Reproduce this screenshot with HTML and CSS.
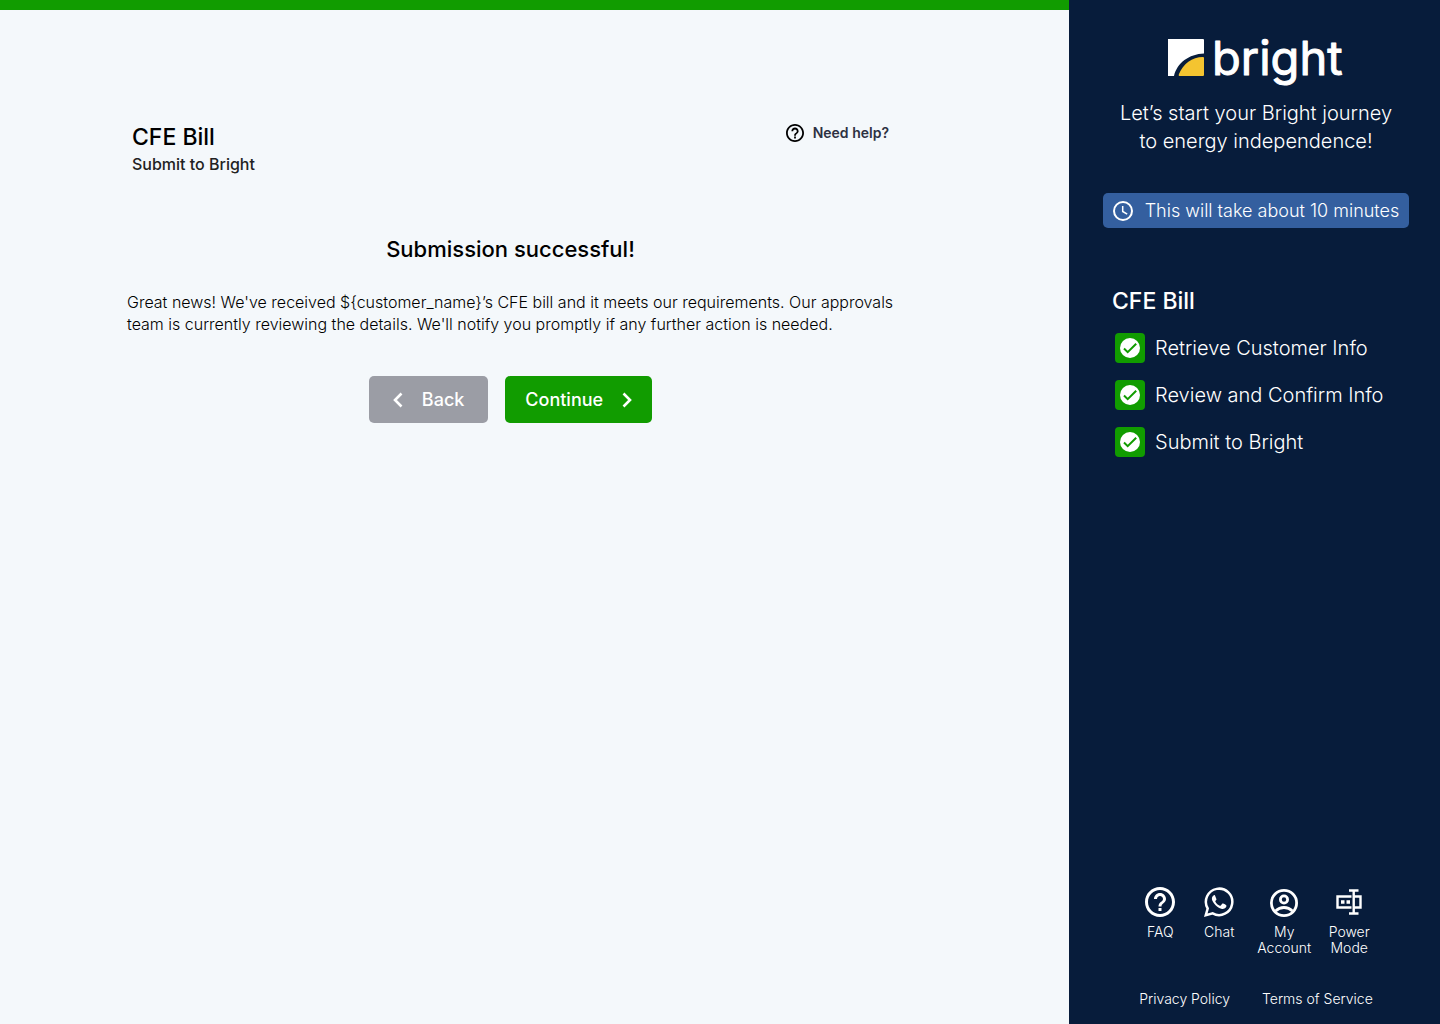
FILE: index.html
```html
<!DOCTYPE html>
<html lang="en">
<head>
<meta charset="utf-8">
<meta name="viewport" content="width=device-width, initial-scale=1">
<title>CFE Bill – Submit to Bright</title>
<link rel="stylesheet" href="styles.css">
</head>
<body>
<div class="page">
  <main class="main">
    <div class="content">
      <header class="heading">
        <div>
          <h1 class="title">CFE Bill</h1>
          <p class="subtitle">Submit to Bright</p>
        </div>
        <a class="help" href="#help">
          <svg width="18" height="18" viewBox="2 2 20 20" fill="currentColor" aria-hidden="true"><path d="M11 18h2v-2h-2v2zm1-16C6.480 2 2 6.480 2 12s4.480 10 10 10 10-4.480 10-10S17.520 2 12 2zm0 18c-4.410 0-8-3.590-8-8s3.590-8 8-8 8 3.590 8 8-3.590 8-8 8zm0-14c-2.210 0-4 1.790-4 4h2c0-1.100.9-2 2-2s2 .9 2 2c0 2-3 1.750-3 5h2c0-2.250 3-2.500 3-5 0-2.210-1.790-4-4-4z"/></svg>
          <span>Need help?</span>
        </a>
      </header>
      <section class="result">
        <h2 class="result-title">Submission successful!</h2>
        <p class="message">Great news! We've received ${customer_name}’s CFE bill and it meets our requirements. Our approvals team is currently reviewing the details. We'll notify you promptly if any further action is needed.</p>
        <div class="actions">
          <button class="button button-back" type="button">
            <svg width="10" height="16" viewBox="0 0 10 16" aria-hidden="true"><path d="M8.500 1.500 2 8l6.500 6.500" fill="none" stroke="currentColor" stroke-width="2.600"/></svg>
            <span>Back</span>
          </button>
          <button class="button button-next" type="button">
            <span>Continue</span>
            <svg width="10" height="16" viewBox="0 0 10 16" aria-hidden="true"><path d="M1.500 1.500 8 8l-6.500 6.500" fill="none" stroke="currentColor" stroke-width="2.600"/></svg>
          </button>
        </div>
      </section>
    </div>
  </main>

  <aside class="sidebar">
    <svg class="logo" width="176" height="66" viewBox="0 -12 176 66" role="img" aria-label="bright">
      <path d="M0 3h35a1 1 0 0 1 1 1v13.500C21 18 9 27 6 40H0z" fill="#fff"/>
      <path d="M36 22v17a1 1 0 0 1-1 1H12q-2 0-1-2C15 28 24 21 35 21q1 0 1 1z" fill="#f4c430"/>
      <text class="wordmark" x="44" y="39">bright</text>
    </svg>
    <p class="tagline">Let’s start your Bright journey<br>to energy independence!</p>
    <p class="duration">
      <svg width="20" height="20" viewBox="0 0 20 20" fill="none" stroke="currentColor" aria-hidden="true"><circle cx="10" cy="10" r="9" stroke-width="2"/><path d="M9.700 5v5.500l4.500 2.700" stroke-width="1.500"/></svg>
      <span>This will take about 10 minutes</span>
    </p>
    <section class="progress">
      <h2 class="progress-title">CFE Bill</h2>
      <ul class="steps">
        <li class="step"><span class="tick"><svg width="20" height="20" viewBox="2 2 20 20" aria-hidden="true"><circle cx="12" cy="12" r="10" fill="#fff"/><path d="m6 12.500 3.700 3.700 8.500-8.500" fill="none" stroke="#119c00" stroke-width="2"/></svg></span>Retrieve Customer Info</li>
        <li class="step"><span class="tick"><svg width="20" height="20" viewBox="2 2 20 20" aria-hidden="true"><circle cx="12" cy="12" r="10" fill="#fff"/><path d="m6 12.500 3.700 3.700 8.500-8.500" fill="none" stroke="#119c00" stroke-width="2"/></svg></span>Review and Confirm Info</li>
        <li class="step"><span class="tick"><svg width="20" height="20" viewBox="2 2 20 20" aria-hidden="true"><circle cx="12" cy="12" r="10" fill="#fff"/><path d="m6 12.500 3.700 3.700 8.500-8.500" fill="none" stroke="#119c00" stroke-width="2"/></svg></span>Submit to Bright</li>
      </ul>
    </section>
    <footer class="footer">
      <nav class="shortcuts">
        <a class="shortcut" href="#faq">
          <svg width="30" height="30" viewBox="2 2 20 20" fill="currentColor" aria-hidden="true"><path d="M11 18h2v-2h-2v2zm1-16C6.480 2 2 6.480 2 12s4.480 10 10 10 10-4.480 10-10S17.520 2 12 2zm0 18c-4.410 0-8-3.590-8-8s3.590-8 8-8 8 3.590 8 8-3.590 8-8 8zm0-14c-2.210 0-4 1.790-4 4h2c0-1.100.9-2 2-2s2 .9 2 2c0 2-3 1.750-3 5h2c0-2.250 3-2.500 3-5 0-2.210-1.790-4-4-4z"/></svg>
          <span>FAQ</span>
        </a>
        <a class="shortcut" href="#chat">
          <svg width="30" height="30" viewBox="0 0 30 30" aria-hidden="true"><path d="M1.800 28.200 3.700 21.500a13.200 13.200 0 1 1 5 4.900z" fill="none" stroke="currentColor" stroke-width="2.500"/><path d="M10.600 8c-.5 0-1 .2-1.400.7-.7.800-1.300 1.700-1.300 3 0 1.500 1 3.200 2.200 4.700 1.800 2.400 4.300 4.500 7.200 5.300 1.700.5 3.500.1 4.500-1.100.6-.8.700-1.600.6-2.200-.1-.4-2.700-1.600-3.300-1.800-.5-.1-.8 0-1.100.5l-1.200 1.500c-.3.300-.6.300-1 .1-1.800-.8-3.500-2.200-4.400-4-.2-.4-.1-.6.200-.9.500-.6 1-1.200.8-1.800l-1.200-3.100c-.2-.7-.3-.9-.6-.9z" fill="currentColor"/></svg>
          <span>Chat</span>
        </a>
        <a class="shortcut" href="#account">
          <svg width="30" height="30" viewBox="0 0 30 30" fill="none" stroke="currentColor" stroke-width="2.800" aria-hidden="true"><circle cx="15" cy="16" r="12.600"/><circle cx="15" cy="12.500" r="3.600"/><path d="M6.500 24c5-4.700 12-4.700 17 0"/></svg>
          <span>My<br>Account</span>
        </a>
        <a class="shortcut" href="#power">
          <svg width="30" height="30" viewBox="0 0 30 30" fill="none" stroke="currentColor" stroke-width="2.400" aria-hidden="true"><path d="M17.500 9.500H3.500v11H17.500M20 9.500h6.500v11H20M15 3.500h9.500M15 26.500h9.500M19.700 3.500v23"/><path d="M7 15h3.500M12.500 15H16" stroke-width="3.400"/></svg>
          <span>Power<br>Mode</span>
        </a>
      </nav>
      <div class="legal">
        <a href="#privacy">Privacy Policy</a>
        <a href="#terms">Terms of Service</a>
      </div>
    </footer>
  </aside>
</div>
</body>
</html>
```
FILE: styles.css
```css
* {
  box-sizing: border-box;
}

body {
  margin: 0;
  font-family: Inter, "Liberation Sans", sans-serif;
  font-size: 16px;
  font-weight: 350;
  color: #000;
  background: #f4f8fb;
}

h1, h2, p, ul {
  margin: 0;
  padding: 0;
}

a {
  color: inherit;
  text-decoration: none;
}

svg {
  display: block;
  flex-shrink: 0;
}

.page {
  display: flex;
  min-height: 100vh;
}

.main {
  flex: 1;
  border-top: 10px solid #119c00;
  padding: 112px 160px 48px 112px;
}

.content {
  max-width: 800px;
}

.heading {
  display: flex;
  justify-content: space-between;
  align-items: flex-start;
  padding: 0 20px;
}

.title {
  font-size: 23px;
  line-height: 30px;
  font-weight: 500;
}

.subtitle {
  line-height: 24px;
  font-weight: 500;
  color: #222;
}

.help {
  display: flex;
  align-items: center;
  gap: 9px;
  padding-top: 2px;
  font-size: 14px;
  line-height: 18px;
  font-weight: 600;
  color: #2d3142;
}

.help svg {
  color: #000;
}

.result {
  padding-top: 58px;
}

.result-title {
  font-size: 22px;
  line-height: 30px;
  font-weight: 500;
  text-align: center;
}

.message {
  margin-top: 27px;
  padding-left: 15px;
  line-height: 22px;
}

.actions {
  display: flex;
  justify-content: center;
  gap: 17px;
  margin-top: 41px;
}

.button {
  display: flex;
  align-items: center;
  gap: 19px;
  height: 47px;
  border: 0;
  border-radius: 5px;
  padding: 0 24px;
  font: inherit;
  font-size: 18px;
  font-weight: 500;
  color: #fff;
}

.button-back {
  background: #9b9da5;
}

.button-next {
  padding: 0 20px;
  background: #119c00;
}

.sidebar {
  display: flex;
  flex-direction: column;
  align-items: center;
  width: 371px;
  padding: 24px 24px 17px 27px;
  color: #fff;
  background: #071c3b;
}

.wordmark {
  font-size: 47px;
  font-weight: 400;
  fill: #fff;
  stroke: #fff;
  stroke-width: 1px;
  stroke-linejoin: round;
}

.tagline {
  margin-top: 9px;
  font-size: 20px;
  line-height: 28px;
  text-align: center;
}

.duration {
  display: flex;
  align-items: center;
  gap: 12px;
  height: 35px;
  margin-top: 38px;
  padding: 0 10px;
  border-radius: 5px;
  font-size: 18px;
  background: #345f9f;
}

.progress {
  align-self: stretch;
  margin-top: 58px;
  padding-left: 16px;
}

.progress-title {
  font-size: 23px;
  line-height: 30px;
  font-weight: 500;
}

.steps {
  display: grid;
  gap: 17px;
  margin-top: 17px;
  padding-left: 3px;
  list-style: none;
}

.step {
  display: flex;
  align-items: center;
  gap: 10px;
  font-size: 20px;
  line-height: 30px;
}

.tick {
  display: grid;
  place-items: center;
  width: 30px;
  height: 30px;
  border-radius: 4px;
  background: #119c00;
}

.footer {
  margin-top: auto;
  font-size: 14px;
  line-height: 16px;
}

.shortcuts {
  display: flex;
  gap: 17px;
}

.shortcut {
  display: flex;
  flex-direction: column;
  align-items: center;
  gap: 7px;
  min-width: 42px;
  text-align: center;
}

.legal {
  display: flex;
  justify-content: center;
  gap: 32px;
  margin-top: 35px;
}
```
